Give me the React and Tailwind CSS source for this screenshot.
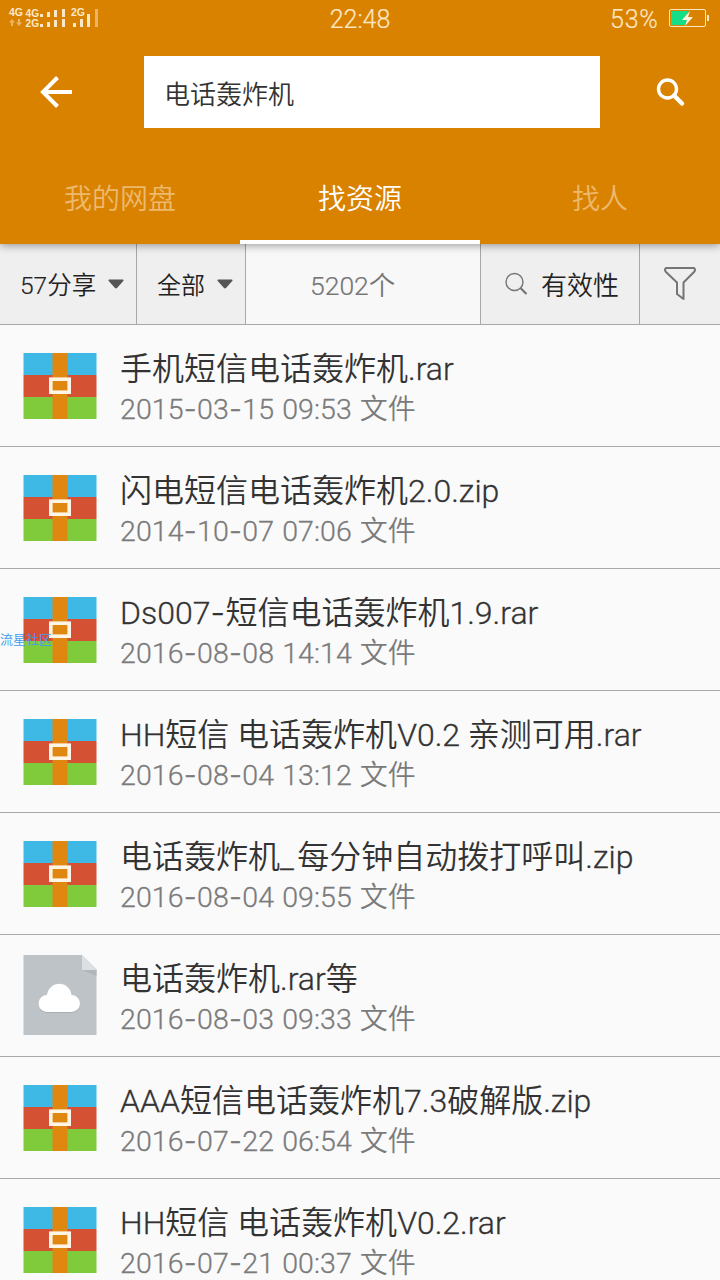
import React from 'react';

const files = [
  { name: '手机短信电话轰炸机.rar', date: '2015-03-15 09:53', type: 'zip' },
  { name: '闪电短信电话轰炸机2.0.zip', date: '2014-10-07 07:06', type: 'zip' },
  { name: 'Ds007-短信电话轰炸机1.9.rar', date: '2016-08-08 14:14', type: 'zip' },
  { name: 'HH短信 电话轰炸机V0.2 亲测可用.rar', date: '2016-08-04 13:12', type: 'zip' },
  { name: '电话轰炸机_每分钟自动拨打呼叫.zip', date: '2016-08-04 09:55', type: 'zip' },
  { name: '电话轰炸机.rar等', date: '2016-08-03 09:33', type: 'cloud' },
  { name: 'AAA短信电话轰炸机7.3破解版.zip', date: '2016-07-22 06:54', type: 'zip' },
  { name: 'HH短信 电话轰炸机V0.2.rar', date: '2016-07-21 00:37', type: 'zip' },
];

const ArchiveIcon = () => (
  <svg width="74" height="66" viewBox="0 0 74 66">
    <rect x="0.5" width="73" height="22" fill="#3eb9e6" />
    <rect x="0.5" y="22" width="73" height="22" fill="#d55133" />
    <rect x="0.5" y="44" width="73" height="22" fill="#7fcb3c" />
    <rect x="29.5" width="15" height="66" fill="#df8710" />
    <rect x="27.8" y="26.2" width="18.4" height="13" fill="#df8710" stroke="#fff5e6" strokeWidth="3.6" />
  </svg>
);

const CloudFileIcon = () => (
  <svg width="74" height="80" viewBox="0 0 74 80" className="-mt-0.5">
    <path d="M0.5 0H59L73.5 14.5V80H0.5Z" fill="#bdc3c7" />
    <path d="M59 15H73.5V21Z" fill="#b0b6ba" />
    <path d="M59 0L73.5 15H59Z" fill="#dce0e2" />
    <path d="M24 58a8.500 8.500 0 0 1 0-17 12 12 0 0 1 24.500 0A8.500 8.500 0 0 1 48.500 58Z" fill="#a9afb3" />
    <path d="M24 57a8.500 8.500 0 0 1 0-17 12.300 12.300 0 0 1 24.500 0A8.500 8.500 0 0 1 48.500 57Z" fill="#fff" />
  </svg>
);

const StatusBar = () => (
  <div className="h-10 flex items-center justify-between text-[#fbe6c6]">
    <svg width="110" height="40" viewBox="0 0 110 40" fill="#fbe8cc" className="font-['Liberation_Sans'] font-bold">
      <text x="9" y="16" fontSize="10" textLength="14" lengthAdjust="spacingAndGlyphs">4G</text>
      <text x="25.500" y="17" fontSize="10" textLength="13.500" lengthAdjust="spacingAndGlyphs">4G</text>
      <text x="25.500" y="27" fontSize="10" textLength="13.500" lengthAdjust="spacingAndGlyphs">2G</text>
      <text x="71" y="16" fontSize="10" textLength="14" lengthAdjust="spacingAndGlyphs">2G</text>
      <g opacity=".5">
        <path d="M12 19l3 3.500h-2v3.500h-2v-3.500H9z" />
        <path d="M19 26l3-3.500h-2V19h-2v3.500h-2z" />
      </g>
      <path d="M40 14h3v3h-3zM47 12h3v5h-3zM54 10h3v7h-3zM62 9h3v8h-3zM40 24h3v3h-3zM47 22h3v5h-3zM54 20h3v7h-3zM62 19h3v8h-3z" />
      <path d="M73 23h3v4h-3zM80 19h3v8h-3zM87 14h3v13h-3z" />
      <path d="M95 9h3v18h-3z" opacity=".5" />
    </svg>
    <span className="text-[25px] leading-[38px] [-webkit-text-stroke:0.2px]">22:48</span>
    <div className="flex items-center w-[110px]">
      <span className="text-[25px] leading-[36px] pb-px w-[59px] whitespace-nowrap tracking-[0.8px] [-webkit-text-stroke:0.2px]">53%</span>
      <svg width="42" height="20" viewBox="0 0 42 20" className="-mt-1">
        <rect x="0.500" y="1.500" width="36" height="17" rx="1.500" fill="none" stroke="currentColor" />
        <path d="M2 3h18l-6 9h4l-1 5H2z" fill="#16dd87" />
        <path d="M21 3l-8 9h5l-2 6 8-9h-5z" fill="#fff3df" />
        <path d="M38 7h2v6h-2z" fill="currentColor" />
      </svg>
    </div>
  </div>
);

const Header = () => (
  <header className="relative z-10 h-[244px] bg-[#d98200] shadow-[0_2px_8px_rgba(0,0,0,0.35)]">
    <StatusBar />
    <div className="flex pt-4">
      <div className="w-36 h-[72px] flex items-center pl-10">
        <svg width="33" height="32" viewBox="0 0 33 32" fill="none" stroke="#fff" strokeWidth="4">
          <path d="M17.500 1.500L3 16l14.500 14.500M3 16h29" />
        </svg>
      </div>
      <div className="w-[456px] h-[72px] bg-white flex items-center pl-5 pt-1.5 text-[26px] text-[#333]">电话轰炸机</div>
      <div className="w-[120px] flex items-center pl-[56px]">
        <svg width="30" height="30" viewBox="0 0 30 30" fill="none" stroke="#fff">
          <circle cx="11.500" cy="12" r="9" strokeWidth="3.400" />
          <path d="M18 18.500l8 8" strokeWidth="4.500" strokeLinecap="round" />
        </svg>
      </div>
    </div>
    <nav className="grid grid-cols-3 h-[116px] text-[28px] text-center text-[#ecb96e]">
      <div className="pt-[52px] leading-10">我的网盘</div>
      <div className="pt-[52px] leading-10 text-white border-b-4 border-white">找资源</div>
      <div className="pt-[52px] leading-10">找人</div>
    </nav>
  </header>
);

const Caret = () => (
  <svg width="16" height="10" viewBox="0 0 16 10">
    <path d="M1 0.500h14q1 .5.3 1.500L9 9q-1 .8-2 0L.7 2Q0 1 1 .5z" fill="#555" />
  </svg>
);

const FilterBar = () => (
  <div className="flex h-[81px] bg-[#efefef] border-b border-[#a8a8a8] text-[26px] text-[#222]">
    <div className="w-[137px] border-r border-[#a8a8a8] flex items-center pl-5 whitespace-nowrap">
      <span className="w-[88px] pt-1 text-[24.500px]"><span className="[-webkit-text-stroke:0.2px]">57</span>分享</span>
      <Caret />
    </div>
    <div className="w-[109px] border-r border-[#a8a8a8] flex items-center pl-5">
      <span className="w-[60px] pt-1 text-[24px]">全部</span>
      <Caret />
    </div>
    <div className="w-[235px] border-r border-[#a8a8a8] bg-[#f8f8f8] flex items-center pl-16 pt-1 text-[26.500px] text-[#757575]">
      <span className="[-webkit-text-stroke:0.2px]">5202</span>个
    </div>
    <div className="w-[159px] border-r border-[#a8a8a8] flex items-center pl-6">
      <svg width="36" height="24" viewBox="0 0 36 24" fill="none" stroke="#757575">
        <circle cx="9.500" cy="10" r="8.500" strokeWidth="1.400" />
        <path d="M15.500 16l6 6" strokeWidth="2.200" />
      </svg>
      <span className="pt-1">有效性</span>
    </div>
    <div className="w-20 flex items-center pl-6">
      <svg width="32" height="34" viewBox="0 0 32 34" fill="none" stroke="#757575" strokeWidth="2" strokeLinejoin="round">
        <path d="M2 1h28q2 2 0 4L19.500 15.500V32L13 27V15.500L2 5q-2-2 0-4z" />
      </svg>
    </div>
  </div>
);

// latin text gets a slightly heavier stroke, hyphens and underscores a wider glyph
const Mixed = ({ text }) =>
  text.split(/(-|_|[\x21-\x2c\x2e-\x5e\x60-\x7e]+)/).map((part, i) => {
    if (i % 2 === 0) return part;
    if (part === '-') return <span key={i} className="font-[Inter] tracking-[0.5px] [-webkit-text-stroke:0.3px]">-</span>;
    if (part === '_') return <span key={i} className="tracking-[3.500px] [-webkit-text-stroke:0.3px]">_</span>;
    return <span key={i} className="[-webkit-text-stroke:0.3px]">{part}</span>;
  });

const FileRow = ({ file }) => (
  <li className="flex h-[122px] border-b border-[#a8a8a8] whitespace-nowrap">
    <div className="w-[120px] pl-[23px] flex items-center">
      {file.type === 'cloud' ? <CloudFileIcon /> : <ArchiveIcon />}
    </div>
    <div className="pt-[22px]">
      <div className="text-[32px] leading-[44px] h-[43px] text-[#333]"><Mixed text={file.name} /></div>
      <div className="text-[28px] leading-[38px] h-[38px] text-[#7b7b7b] [word-spacing:1px]">
        <span className="text-[28.500px] tracking-[0.1px]"><Mixed text={file.date} /></span> 文件
      </div>
    </div>
  </li>
);

export default function App() {
  return (
    <div className="relative w-[720px] h-[1280px] overflow-hidden bg-[#fafafa] font-[Roboto,'Noto_Sans_CJK_SC',sans-serif] font-[350]">
      <Header />
      <FilterBar />
      <ul>
        {files.map((file) => (
          <FileRow key={file.date} file={file} />
        ))}
      </ul>
      <span className="absolute left-0 top-[631px] text-[13px] leading-[18px] text-[#3a9bee]">流星社区</span>
    </div>
  );
}
